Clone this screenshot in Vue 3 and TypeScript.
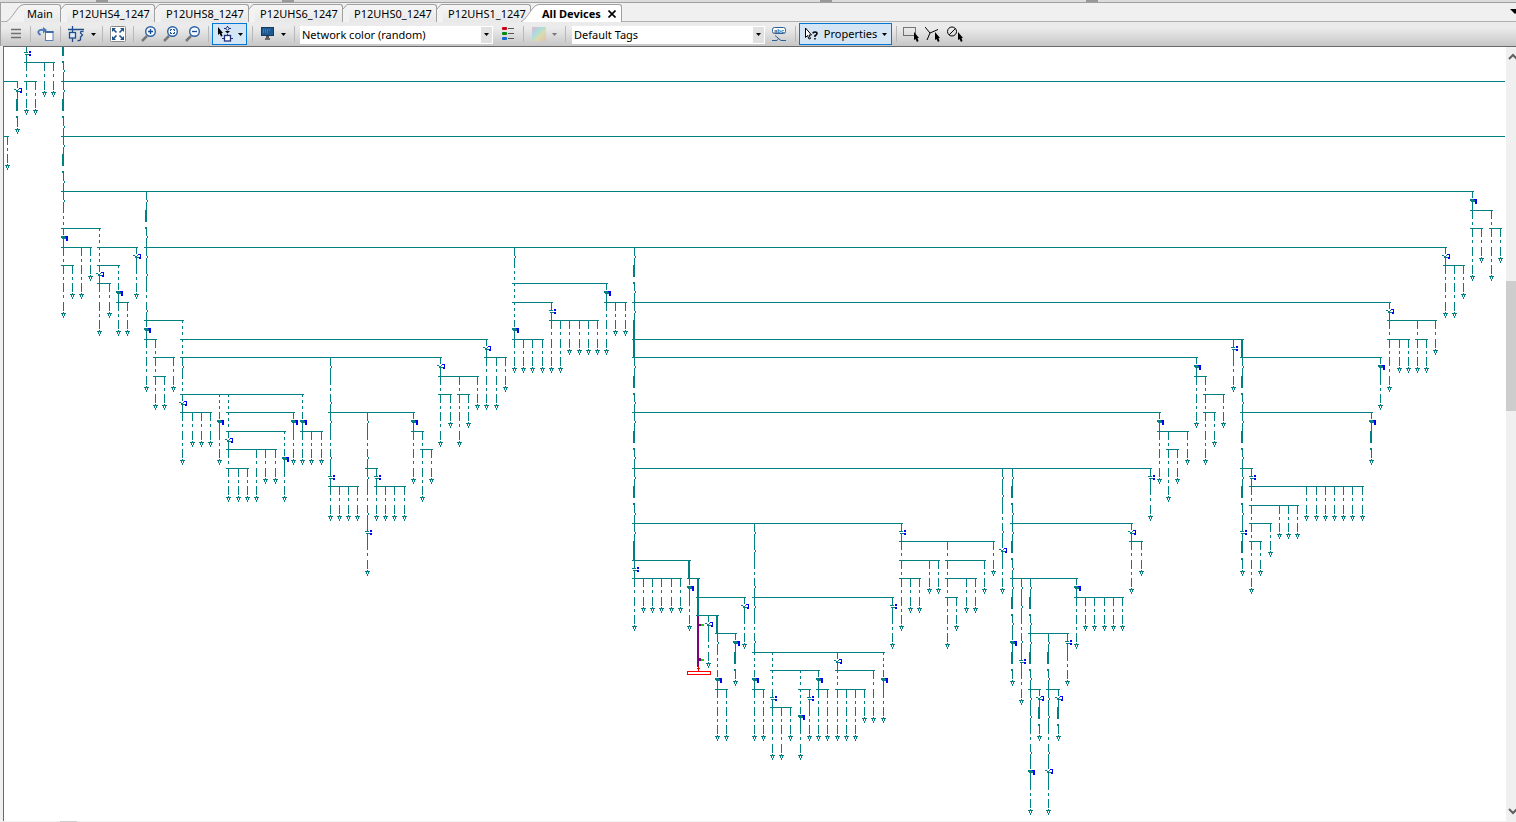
<script setup lang="ts">
import { ref } from 'vue'

interface Tab { id: string; label: string }

const tabs: Tab[] = [
  { id: 'main', label: 'Main' },
  { id: 'uhs4', label: 'P12UHS4_1247' },
  { id: 'uhs8', label: 'P12UHS8_1247' },
  { id: 'uhs6', label: 'P12UHS6_1247' },
  { id: 'uhs0', label: 'P12UHS0_1247' },
  { id: 'uhs1', label: 'P12UHS1_1247' },
]
const colorMode = ref('Network color (random)')
const tagSet = ref('Default Tags')

// Vertical position of every level of the network tree.
const levels = [
  44, 62, 81, 99, 118, 136, 154, 173, 191, 210, 228, 247, 265, 283, 302, 320, 339, 357, 376, 394, 412,
  431, 449, 468, 486, 505, 523, 541, 560, 578, 597, 615, 633, 652, 670, 689, 707, 725, 744, 762, 781, 799, 818,
]

// Busbars: level, then [first column, last column] pairs.
const buses: [number, [number, number][]][] = [
  [62, [[26, 53]]],
  [81, [[2, 16], [26, 35], [63, 2400]]],
  [136, [[2, 7], [63, 2400]]],
  [191, [[63, 1472]]],
  [210, [[1472, 1491]]],
  [228, [[63, 99], [1472, 1481], [1491, 1500]]],
  [247, [[63, 90], [99, 136], [146, 1445]]],
  [265, [[63, 72], [99, 118], [1445, 1463]]],
  [283, [[99, 109], [514, 606]]],
  [302, [[118, 127], [514, 551], [606, 625], [634, 1389]]],
  [320, [[146, 182], [551, 597], [1389, 1435]]],
  [339, [[146, 155], [182, 486], [514, 542], [634, 1242], [1389, 1408], [1417, 1426]]],
  [357, [[155, 173], [182, 440], [486, 505], [634, 1196], [1242, 1380]]],
  [376, [[155, 164], [440, 477], [1196, 1205]]],
  [394, [[182, 302], [440, 450], [459, 468], [1205, 1223]]],
  [412, [[182, 210], [228, 293], [330, 413], [634, 1159], [1205, 1214], [1242, 1371]]],
  [431, [[228, 284], [302, 321], [413, 422], [1159, 1187]]],
  [449, [[228, 275], [422, 431], [1168, 1177]]],
  [468, [[228, 247], [367, 376], [634, 1150], [1242, 1251]]],
  [486, [[330, 357], [376, 404], [1251, 1362]]],
  [505, [[1251, 1297]]],
  [523, [[634, 901], [1012, 1131], [1251, 1270]]],
  [541, [[901, 993], [1131, 1141], [1251, 1260]]],
  [560, [[634, 689], [901, 938], [947, 984]]],
  [578, [[634, 680], [689, 698], [901, 919], [947, 975], [1012, 1076]]],
  [597, [[698, 744], [754, 892], [947, 956], [1076, 1122]]],
  [615, [[698, 717]]],
  [633, [[717, 735], [1030, 1067]]],
  [652, [[754, 883]]],
  [670, [[772, 818], [837, 873]]],
  [689, [[717, 726], [754, 763], [800, 809], [818, 827], [837, 864], [1030, 1039], [1048, 1058]]],
  [707, [[772, 790]]],
]

// Feeders: starting level, one letter per level passed, then the columns.
// a dashed, s short dashes, 1/3 joint, 2 cable, T heavy cable, d/D/E device, v load
const feeders: [number, string, number[]][] = [
  [44, 'daav', [26]], [44, '231231231sDaaav', [63]],
  [62, 'av', [44, 53]], [81, 'av', [35]], [81, 'E2v', [17]], [136, 'av', [7]],
  [191, '12311a3Daav', [146]], [191, 'Daaav', [1472]],
  [210, 'aaav', [1491]], [228, 'av', [1481, 1500]], [228, 'ssEaav', [99]],
  [247, 'aav', [81]], [247, 'av', [90]], [247, 'Eav', [136]], [247, '1sssDav', [514]],
  [247, '1231TT1231231231Tdaav', [634]], [247, 'Eaav', [1445]],
  [265, 'av', [72, 1463]], [265, 'sDav', [118]], [265, 'aav', [1454]],
  [283, 'av', [109]], [283, 'Daav', [606]],
  [302, 'av', [127, 615, 625]], [302, 'daav', [551]], [302, 'Eaaav', [1389]],
  [320, 'ss1sEaav', [182]], [320, 'aav', [560, 1417]], [320, 'av', [569, 579, 588, 597, 1435]],
  [339, 'aaav', [155]], [339, 'Eaav', [486]], [339, 'av', [523, 532, 542, 1399, 1408, 1426]],
  [339, 'dav', [1233]], [339, 'T123123123d2v', [1242]],
  [357, 'av', [173, 505]], [357, '1a31a3dav', [330]], [357, 'Eaaav', [440]], [357, 'aav', [496]],
  [357, 'Daav', [1196]], [357, 'Dav', [1380]],
  [376, 'av', [164, 477]], [376, 'aaav', [459]], [376, 'aaaav', [1205]],
  [394, 'sDav', [219, 302]], [394, 'ssEaav', [228]], [394, 'av', [450, 468, 1223]],
  [412, 'av', [192, 201, 210, 1214]], [412, 'Dav', [293]], [412, '1a31a3dav', [367]],
  [412, 'Daav', [413, 1159]], [412, 'D2v', [1371]],
  [431, 'sDav', [284]], [431, 'av', [311, 321, 1187]], [431, 'aaav', [422, 1168]],
  [449, 'aav', [256]], [449, 'av', [265, 275, 431, 1177]],
  [468, 'av', [238, 247]], [468, 'dav', [376, 1150]], [468, '11a3Eav', [1002]],
  [468, '123123123D2v', [1012]], [468, 'daaaaav', [1251]],
  [486, 'av', [339, 348, 357, 385, 394, 404, 1306, 1316, 1325, 1334, 1343, 1352, 1362]],
  [505, 'av', [1279, 1288, 1297]],
  [523, '11a31a3sDaav', [754]], [523, 'daaaav', [901]], [523, 'Eaav', [1131]], [523, 'av', [1270]],
  [541, 'av', [993, 1141, 1260]], [541, 'aaaaav', [947]],
  [560, 'TDav', [689]], [560, 'av', [929, 938, 984]],
  [578, 'av', [643, 652, 661, 671, 680, 910, 919, 966, 975]], [578, 'TT', [698]],
  [578, '11a3dav', [1021]], [578, '12312311a3Dav', [1030]], [578, 'Daav', [1076]],
  [597, 'Eav', [744]], [597, 'dav', [892]], [597, 'av', [956, 1085, 1094, 1104, 1113, 1122]],
  [615, 'Eav', [708]], [615, 'T1sDaav', [717]],
  [633, 'D2v', [735]], [633, '12311a3Eav', [1048]], [633, 'dav', [1067]],
  [652, 'ssdaav', [772]], [652, 'Esaav', [837]], [652, 'sDav', [883]],
  [670, 'ssDav', [800]], [670, 'Daav', [818]], [670, 'aav', [873]],
  [689, 'aav', [726, 763, 827, 846, 855]], [689, 'dav', [809]], [689, 'av', [864]],
  [689, 'E2v', [1039, 1058]],
  [707, 'aav', [781]], [707, 'av', [790]],
]

const box = (x: number, y: number, w: number, h: number): string => `M${x} ${y}h${w}v${h}h${-w}z`

let wires = ''
let labels = ''

for (const [y, spans] of buses) for (const [a, b] of spans) wires += box(a - 2, y, b - a + 4, 1)

function device(x: number, y: number, kind: string): void {
  wires += box(x, y, 1, 7) + box(x, y + 11, 1, 8) + box(x - 1, y + 10, 4, 1)
  if (kind === 'd') {
    wires += box(x, y + 7, 1, 1) + box(x - 2, y + 8, 4, 1)
    labels += box(x + 3, y + 7, 2, 2) + box(x + 3, y + 10, 2, 2)
  } else if (kind === 'D') {
    wires += box(x - 2, y + 8, 4, 2) + box(x + 1, y + 9, 2, 1)
    labels += box(x + 3, y + 8, 2, 5) + box(x + 2, y + 8, 1, 1)
  } else {
    wires += box(x - 3, y + 8, 2, 1) + box(x - 1, y + 9, 2, 1) + box(x + 1, y + 8, 1, 1)
    labels += box(x + 2, y + 7, 3, 1) + box(x + 4, y + 8, 1, 2) + box(x + 3, y + 10, 2, 2)
  }
}

for (const [top, pattern, columns] of feeders) {
  const first = levels.indexOf(top)
  for (const x of columns) {
    pattern.split('').forEach((kind, i) => {
      const y = levels[first + i]
      const h = levels[first + i + 1] - y
      if (kind === 'a') wires += box(x, y, 1, 9) + box(x, y + 12, 1, 3)
      else if (kind === 's') wires += box(x, y, 1, 3) + box(x, y + 6, 1, 3) + box(x, y + 12, 1, 3)
      else if (kind === '1') wires += box(x, y, 1, 9) + box(x + 1, y + 9, 1, 2) + box(x, y + 11, 1, h - 11)
      else if (kind === '3') wires += box(x, y, 1, 8) + box(x + 1, y + 8, 1, 2) + box(x, y + 10, 1, h - 10)
      else if (kind === '2') wires += box(x - 1, y, 2, 12) + box(x - 1, y + 17, 2, 2)
      else if (kind === 'T') wires += box(x - 1, y, 2, h)
      else if (kind === 'v') {
        wires += box(x, y, 1, 9) + box(x, y + 10, 1, 1) + box(x - 2, y + 11, 5, 1)
          + box(x - 1, y + 12, 1, 2) + box(x + 1, y + 12, 1, 2) + box(x, y + 14, 1, 2)
      } else if ('dDE'.includes(kind)) device(x, y, kind)
    })
  }
}
</script>

<template>
  <div class="app">
    <div class="splitter"><i></i><i></i><i></i><i></i></div>
    <nav class="tabs" role="tablist" aria-label="Diagrams">
      <div v-for="(tab, i) in tabs" :key="tab.id" class="tab" :class="{ first: i === 0 }">
        <svg v-if="i === 0" class="lead" width="18" height="18" aria-hidden="true">
          <path d="M0 18C5 15 8 9 12 4Q15 .5 18 .5V18z" fill="#f2f2f2" />
          <path d="M0 18C5 15 8 9 12 4Q15 .5 18 .5" fill="none" stroke="#a0a0a0" />
        </svg>
        <svg v-else class="lead" width="6" height="18" aria-hidden="true">
          <path d="M0 18V5L4 .5H6V18z" fill="#f2f2f2" />
          <path d="M0 5L4 .5H6" fill="none" stroke="#a0a0a0" />
        </svg>
        <button type="button" role="tab" aria-selected="false" class="tab-label">{{ tab.label }}</button>
      </div>
      <div class="tab active">
        <svg class="lead" width="18" height="18" aria-hidden="true">
          <path d="M0 18C5 15 8 9 12 4Q15 .5 18 .5V18z" fill="#fff" />
          <path d="M0 18C5 15 8 9 12 4Q15 .5 18 .5" fill="none" stroke="#a0a0a0" />
        </svg>
        <button type="button" role="tab" aria-selected="true" class="tab-label">All Devices</button>
        <button type="button" class="close" aria-label="Close tab">
          <svg width="8" height="8"><path d="M.5 .5L7.500 7.500M7.500 .5L.5 7.500" stroke="#000" stroke-width="1.600" /></svg>
        </button>
      </div>
      <button type="button" class="tab-list" aria-label="Tab list">
        <svg width="6" height="5"><path d="M0 0H10L5 5z" /></svg>
      </button>
    </nav>

    <div class="toolbar" role="toolbar" aria-label="Diagram tools">
      <button type="button" class="tool menu" aria-label="Menu">
        <svg width="12" height="12"><path d="M1 1.500H11M1 5.500H11M1 9.500H11" stroke="#707070" stroke-width="1.400" /></svg>
      </button>
      <span class="sep"></span>
      <button type="button" class="tool" aria-label="Refresh view">
        <svg width="17" height="16">
          <path d="M3.500 9C-1 6 2 3 7 4" fill="none" stroke="#4a78b8" stroke-width="1.800" /><path d="M6 1L10 4L6 7.500z" fill="#4a78b8" />
          <rect x="8.500" y="5.500" width="7.500" height="9" fill="#fff" stroke="#5a80b8" /><path d="M8 6H16.500" stroke="#3f6ba8" stroke-width="2" />
        </svg>
      </button>
      <span class="sep"></span>
      <button type="button" class="tool with-caret" aria-label="Diagram layout">
        <svg width="17" height="16" fill="none" stroke="#1f4e8c" stroke-width="1.300">
          <path d="M0 3.500H16M4.500 0V6M4.500 12V16" /><rect x="1.500" y="6.500" width="6" height="5.500" fill="#dfeafa" /><path d="M15.500 5.500Q12 5 12.500 7L14.500 9L12.500 11V13.500Q12 15 9.500 14.500" />
        </svg>
        <svg class="caret" width="5" height="3"><path d="M0 0H5L2.500 3z" /></svg>
      </button>
      <span class="sep"></span>
      <button type="button" class="tool" aria-label="Zoom to fit">
        <svg width="16" height="16">
          <rect x=".5" y=".5" width="15" height="15" rx="1" fill="#fff" stroke="#888" />
          <path d="M2 6V2H6zM10 2H14V6zM2 10V14H6zM14 10V14H10z" fill="#1f5288" /><path d="M3 3L6.500 6.500M13 3L9.500 6.500M3 13L6.500 9.500M13 13L9.500 9.500" stroke="#1f5288" stroke-width="1.600" />
        </svg>
      </button>
      <span class="sep"></span>
      <button type="button" class="tool" aria-label="Zoom in">
        <svg width="16" height="16"><path d="M1 15L6 10" stroke="#777" stroke-width="2.500" /><circle cx="9.500" cy="5.500" r="4.800" fill="#f5f9ff" stroke="#2b5fa5" stroke-width="1.400" /><path d="M7 5.500H12M9.500 3V8" stroke="#174a8c" stroke-width="1.300" /></svg>
      </button>
      <button type="button" class="tool" aria-label="Zoom to area">
        <svg width="16" height="16"><path d="M1 15L6 10" stroke="#777" stroke-width="2.500" /><circle cx="9.500" cy="5.500" r="4.800" fill="#f5f9ff" stroke="#2b5fa5" stroke-width="1.400" /><path d="M7.500 5V3.500H9M10 3.500H11.500V5M11.500 6V7.500H10M9 7.500H7.500V6" fill="none" stroke="#174a8c" /></svg>
      </button>
      <button type="button" class="tool" aria-label="Zoom out">
        <svg width="16" height="16"><path d="M1 15L6 10" stroke="#777" stroke-width="2.500" /><circle cx="9.500" cy="5.500" r="4.800" fill="#f5f9ff" stroke="#2b5fa5" stroke-width="1.400" /><path d="M7 5.500H12" stroke="#174a8c" stroke-width="1.300" /></svg>
      </button>
      <span class="sep gap"></span>
      <button type="button" class="tool with-caret pressed pick" aria-label="Select devices">
        <svg width="17" height="16">
          <path d="M1 1V9L2.500 7.500L4 10.500L5.500 10L4.500 7H6z" /><path d="M7 2.500H14M10.500 0V1M10.500 8V10M5 12.500H8M13 12.500H16" stroke="#1f2f7c" />
          <circle cx="10.500" cy="2.500" r="1.500" fill="#fff" stroke="#1f2f7c" /><path d="M8 5H13L10.500 7.500z" /><rect x="7.500" y="9.500" width="6" height="5.500" fill="#fff" stroke="#1f2f7c" stroke-width="1.300" />
        </svg>
        <svg class="caret" width="5" height="3"><path d="M0 0H5L2.500 3z" /></svg>
      </button>
      <span class="sep light"></span>
      <button type="button" class="tool with-caret" aria-label="Display">
        <svg width="14" height="14"><rect x=".5" y=".5" width="12" height="8" fill="#1d5a94" stroke="#173a5e" /><path d="M2 3H9M2 5H7" stroke="#4f9bd0" stroke-dasharray="1 1" /><path d="M6.500 9V11" stroke="#555" stroke-width="3" /><path d="M4 12H9" stroke="#444" stroke-width="1.500" /></svg>
        <svg class="caret" width="5" height="3"><path d="M0 0H5L2.500 3z" /></svg>
      </button>
      <span class="sep"></span>
      <label class="combo">
        <select v-model="colorMode" aria-label="Network coloring"><option>Network color (random)</option></select>
        <span class="drop"><svg width="5" height="3"><path d="M0 0H5L2.500 3z" /></svg></span>
      </label>
      <button type="button" class="tool legend" aria-label="Legend">
        <svg width="13" height="14"><rect width="5" height="3" rx="1" fill="#d00010" /><rect y="5" width="5" height="3" rx="1" fill="#008a10" /><rect y="10" width="5" height="3" rx="1" fill="#1068d8" /><path d="M6 1.500H12M6 6.500H12M6 11.500H12" stroke="#555" /></svg>
      </button>
      <span class="sep"></span>
      <button type="button" class="tool with-caret palette" aria-label="Color palette" disabled>
        <span class="swatch"></span>
        <svg class="caret" width="5" height="3"><path d="M0 0H5L2.500 3z" fill="#777" /></svg>
      </button>
      <span class="sep"></span>
      <label class="combo second">
        <select v-model="tagSet" aria-label="Tag set"><option>Default Tags</option></select>
        <span class="drop"><svg width="5" height="3"><path d="M0 0H5L2.500 3z" /></svg></span>
      </label>
      <button type="button" class="tool tags" aria-label="Edit tags">
        <svg width="15" height="15"><rect x=".5" y=".5" width="13" height="6" rx="2" fill="#fff" stroke="#2b5f95" /><text x="2" y="6" class="abc">abc</text><path d="M3 8.500L9 13.500H14M0 13.500H5L7 11" fill="none" stroke="#2b5f95" /></svg>
      </button>
      <span class="sep"></span>
      <button type="button" class="tool with-caret pressed props">
        <svg width="15" height="14" aria-hidden="true"><path d="M1.500 1V10.500L3.500 8.500L5 12L6.500 11.500L5 8H7.500z" fill="#fff" stroke="#000" /><path d="M9 6.500Q9 5 11 5T13 6.500Q13 8 11 8.500V10M11 11V12.500" fill="none" stroke="#000" stroke-width="1.500" /></svg>
        <span class="props-text">Properties</span>
        <svg class="caret" width="5" height="3"><path d="M0 0H5L2.500 3z" /></svg>
      </button>
      <span class="sep end"></span>
      <button type="button" class="tool mode" aria-label="Select by rectangle">
        <svg width="17" height="16"><rect x=".5" y="1.500" width="12" height="8" fill="none" stroke="#000" stroke-dasharray="1 1" /><path d="M11 6V14L12.500 13L14 16L15.500 15L14.500 12H16z" /></svg>
      </button>
      <button type="button" class="tool mode" aria-label="Select by line">
        <svg width="17" height="16"><path d="M0 1L5 7L13 3.500M5 7L2 14" fill="none" stroke="#000" /><path d="M10 6V14L11.500 13L13 16L14.500 15L13.500 12H15z" /></svg>
      </button>
      <button type="button" class="tool mode" aria-label="Clear selection">
        <svg width="17" height="16"><circle cx="5" cy="5.500" r="4.500" fill="none" stroke="#000" /><path d="M2 9L8.500 2.500" stroke="#000" /><path d="M11 6V14L12.500 13L14 16L15.500 15L14.500 12H16z" /></svg>
      </button>
    </div>

    <main class="workspace">
      <svg class="diagram" role="img" aria-label="Network diagram" shape-rendering="crispEdges">
        <g transform="translate(-4 -47)">
          <path :d="wires" fill="#008080" />
          <path :d="labels" fill="#0000ff" />
          <path d="M697 616h2v8h2v2h-2v32h2v3h-2v6h-2z" fill="#800080" />
          <path d="M701 624h3v2h-3zM701 659h3v2h-3z" fill="#00e000" />
          <path d="M698 666h1v2h1v1h-1v2h-1v-2h-1v-1h1z" fill="#ff0000" />
          <rect x="687.500" y="671.500" width="23" height="3" fill="none" stroke="#ff0000" />
        </g>
      </svg>
      <div class="scroll" aria-hidden="true">
        <svg width="10" height="7"><path d="M3 6L7 2L11 6" fill="none" stroke="#606060" stroke-width="2" /></svg>
        <span class="thumb"></span>
        <svg class="down" width="10" height="7"><path d="M3 1L7 5L11 1" fill="none" stroke="#606060" stroke-width="2" /></svg>
      </div>
    </main>
    <div class="bottom"><span></span></div>
  </div>
</template>

<style>
html, body { margin: 0; height: 100%; overflow: hidden; }
#app { height: 100%; }
</style>

<style scoped>
.app {
  display: flex;
  flex-direction: column;
  height: 100vh;
  background: #f0f0f0;
  color: #000;
  font: 11px/16px "Noto Sans", "Open Sans", sans-serif;
}
.app button { font: inherit; color: inherit; border: 0; padding: 0; margin: 0; background: none; }
.app svg { display: block; flex: none; }

.splitter {
  display: flex;
  box-sizing: border-box;
  height: 3px;
  background: #dcdcdc;
  border-bottom: 1px solid #a0a0a0;
}
.splitter i { width: 12px; background: #999; }
.splitter i:nth-child(1) { margin-left: 96px; }
.splitter i:nth-child(2) { margin-left: 174px; }
.splitter i:nth-child(3) { margin-left: 526px; }
.splitter i:nth-child(4) { margin-left: 254px; }

.tabs {
  display: flex;
  height: 19px;
  box-sizing: border-box;
  padding: 1px 0 0 5px;
  border-left: 1px solid #a0a0a0;
  border-bottom: 1px solid #b0b0b0;
}
.tab { display: flex; width: 94px; height: 18px; }
.tab.first { width: 55px; }
.tab-label {
  flex: 1;
  white-space: nowrap;
  text-align: left;
}
.app .tab-label {
  box-sizing: border-box;
  height: 18px;
  padding-left: 5px;
  background: linear-gradient(#f6f6f6, #e8e8e8);
  border-top: 1px solid #a0a0a0;
  border-right: 1px solid #a0a0a0;
  border-top-right-radius: 3px;
}
.app .first .tab-label { padding-left: 3px; }
.tab.active { width: 101px; margin-left: -10px; position: relative; background: none; }
.app .active .tab-label {
  padding-left: 3px;
  background: #fff;
  border-right: 0;
  border-radius: 0;
  font-weight: 700;
}
.app .active .close {
  display: flex;
  align-items: center;
  width: 14px;
  background: #fff;
  border-top: 1px solid #a0a0a0;
  border-right: 1px solid #a0a0a0;
  border-top-right-radius: 3px;
}
.app .tab-list { margin-left: auto; padding-bottom: 2px; }

.toolbar {
  display: flex;
  align-items: center;
  height: 24px;
  box-sizing: border-box;
  padding-left: 9px;
  border-left: 1px solid #a0a0a0;
  background: linear-gradient(#ebebeb 25%, #c6c6c6);
}
.tool {
  display: flex;
  align-items: center;
  justify-content: center;
  flex: none;
  width: 22px;
  height: 22px;
}
.tool.menu { width: 12px; }
.sep { width: 1px; height: 16px; margin: 0 4px 0 4px; background: #b8b8b8; flex: none; }
.menu + .sep { margin-left: 8px; margin-right: 3px; }
.tool.with-caret { width: 33px; gap: 6px; }
.sep.gap { margin: 0 3px 0 4px; }
.app .pressed { box-sizing: border-box; background: #d4e5f6; border: 1px solid #0078d7; }
.app .pick { width: 35px; gap: 4px; }
.app .pick + .sep { margin-left: 5px; }
.combo { display: flex; flex: none; width: 193px; height: 18px; background: #fff; margin: 1px 0 0 1px; }
.combo.second { margin-left: 2px; }
.combo select {
  appearance: none;
  flex: 1;
  min-width: 0;
  padding: 0 0 0 2px;
  border: 0;
  background: #fff;
  color: #000;
  font: inherit;
}
.drop {
  display: flex;
  align-items: center;
  justify-content: center;
  width: 11px;
  margin: 1px;
  background: #e1e1e1;
}
.tool.legend { width: 21px; margin-left: 5px; }
.swatch { width: 14px; height: 14px; background: linear-gradient(135deg, #e0b8d0, #a8dce0 35%, #d8dcb0 60%, #e8c0a8); }
.tool.tags { width: 16px; margin: 0 4px 0 6px; }
.abc { font: bold 6px/6px "Liberation Sans", sans-serif; fill: #2b5f95; }
.app .props { width: 93px; gap: 5px; margin-left: -1px; }
.sep.end { margin: 0 3px 0 4px; }

.workspace {
  display: flex;
  flex: 1;
  min-height: 0;
  margin-left: 3px;
  border-left: 1px solid #696969;
  border-top: 1px solid #696969;
  background: #fff;
}
.app .diagram { flex: 1 1 0; min-width: 0; height: 100%; margin-right: 1px; overflow: hidden; }
.scroll {
  display: flex;
  flex-direction: column;
  flex: none;
  width: 10px;
  box-sizing: border-box;
  padding: 6px 0;
  background: #f0f0f0;
}
.thumb { height: 17%; margin: 221px 0 auto; background: #cdcdcd; }
.bottom { height: 1px; background: #f0f0f0; }
.bottom span { display: block; width: 17px; height: 1px; margin-left: 60px; background: #cdcdcd; }
</style>
